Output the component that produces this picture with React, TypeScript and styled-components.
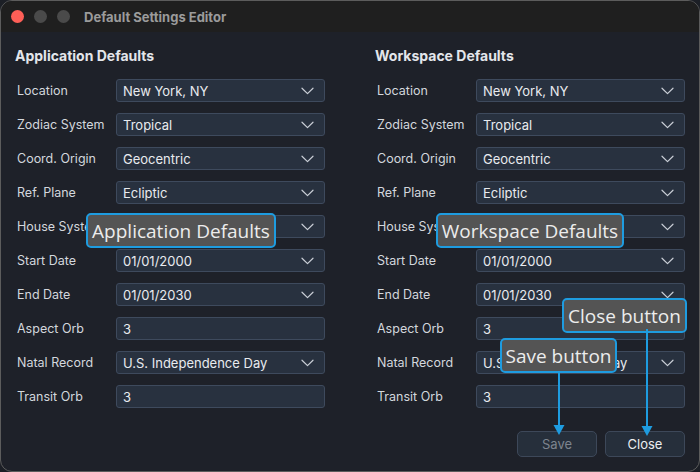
import { FC } from 'react';
import styled, { createGlobalStyle } from 'styled-components';

const GlobalStyle = createGlobalStyle`
  html, body {
    margin: 0;
    padding: 0;
    background: #1c1f26;
  }
  body {
    font-family: Inter, "Liberation Sans", sans-serif;
  }
`;

type Field = {
  label: string;
  value: string;
  select?: boolean;
};

const fields: Field[] = [
  { label: 'Location', value: 'New York, NY', select: true },
  { label: 'Zodiac System', value: 'Tropical', select: true },
  { label: 'Coord. Origin', value: 'Geocentric', select: true },
  { label: 'Ref. Plane', value: 'Ecliptic', select: true },
  { label: 'House System', value: 'Placidus', select: true },
  { label: 'Start Date', value: '01/01/2000', select: true },
  { label: 'End Date', value: '01/01/2030', select: true },
  { label: 'Aspect Orb', value: '3' },
  { label: 'Natal Record', value: 'U.S. Independence Day', select: true },
  { label: 'Transit Orb', value: '3' },
];

const Chevron: FC = () => (
  <svg width="13" height="8" viewBox="0 0 13 8" fill="none">
    <path d="M1 1.2 L6.5 6.6 L12 1.2" stroke="#c9ced6" strokeWidth="1.2" strokeLinecap="round" strokeLinejoin="round" />
  </svg>
);

const SettingsColumn: FC<{ title: string }> = ({ title }) => (
  <Column>
    <Heading>{title}</Heading>
    <Rows>
      {fields.map((f) => (
        <Row key={f.label}>
          <Label>{f.label}</Label>
          <Input>
            <span>{f.value}</span>
            {f.select && <Chevron />}
          </Input>
        </Row>
      ))}
    </Rows>
  </Column>
);

const Arrow: FC<{ x: number; y1: number; y2: number }> = ({ x, y1, y2 }) => (
  <ArrowSvg width="14" height={y2 - y1} style={{ left: x - 7, top: y1 }} viewBox={`0 0 14 ${y2 - y1}`}>
    <line x1="7" y1="0" x2="7" y2={y2 - y1 - 8} stroke="#1e9ce0" strokeWidth="2" />
    <path d={`M1.5 ${y2 - y1 - 10} L12.5 ${y2 - y1 - 10} L7 ${y2 - y1} Z`} fill="#1e9ce0" />
  </ArrowSvg>
);

const App: FC = () => (
  <>
    <GlobalStyle />
    <Window>
      <TitleBar>
        <Light color="#fe5f57" />
        <Light color="#4a4a4a" />
        <Light color="#4a4a4a" />
        <Title>Default Settings Editor</Title>
      </TitleBar>
      <Body>
        <Columns>
          <SettingsColumn title="Application Defaults" />
          <SettingsColumn title="Workspace Defaults" />
        </Columns>
        <Footer>
          <Button disabled>Save</Button>
          <Button>Close</Button>
        </Footer>
      </Body>

      <Callout style={{ left: 85, top: 212, width: 190 }}>Application Defaults</Callout>
      <Callout style={{ left: 435, top: 212, width: 188 }}>Workspace Defaults</Callout>
      <Callout style={{ left: 561, top: 297, width: 125 }}>Close button</Callout>
      <Callout style={{ left: 499, top: 337, width: 117 }}>Save button</Callout>
      <Arrow x={558} y1={370} y2={434} />
      <Arrow x={646} y1={328} y2={435} />
    </Window>
  </>
);

export default App;

const Window = styled.div`
  position: relative;
  box-sizing: border-box;
  width: 700px;
  height: 472px;
  border: 1px solid #5c5c5c;
  border-radius: 12px;
  overflow: hidden;
  background: #1e2129;
  display: flex;
  flex-direction: column;
`;

const TitleBar = styled.div`
  height: 31px;
  background: #1f1f1f;
  display: flex;
  align-items: center;
  padding-left: 10px;
  gap: 10px;
  flex-shrink: 0;
`;

const Light = styled.div<{ color: string }>`
  width: 13px;
  height: 13px;
  border-radius: 50%;
  background: ${({ color }) => color};
`;

const Title = styled.div`
  margin-left: 4px;
  font-size: 13px;
  font-weight: 700;
  color: #9b9b9b;
`;

const Body = styled.div`
  flex: 1;
  display: flex;
  flex-direction: column;
  padding: 15px 14px 14px 14px;
`;

const Columns = styled.div`
  display: grid;
  grid-template-columns: 310px 310px;
  column-gap: 50px;
`;

const Column = styled.div`
  display: flex;
  flex-direction: column;
`;

const Heading = styled.div`
  font-size: 14px;
  font-weight: 700;
  color: #e3e6eb;
  height: 18px;
  line-height: 18px;
  margin-bottom: 14px;
`;

const Rows = styled.div`
  display: flex;
  flex-direction: column;
  gap: 11px;
`;

const Row = styled.div`
  display: flex;
  align-items: center;
`;

const Label = styled.div`
  box-sizing: border-box;
  width: 101px;
  padding-left: 2px;
  font-size: 12.5px;
  color: #d3d7dd;
  margin-top: -1px;
`;

const Input = styled.div`
  box-sizing: border-box;
  width: 209px;
  height: 23px;
  padding: 0 10px 0 6px;
  display: flex;
  align-items: center;
  justify-content: space-between;
  background: #28313f;
  border: 1px solid #3e4a5d;
  border-radius: 3px;
  font-size: 13px;
  color: #e8ebef;
`;

const Footer = styled.div`
  margin-top: auto;
  display: flex;
  justify-content: flex-end;
  gap: 8px;
`;

const Button = styled.button`
  box-sizing: border-box;
  width: 80px;
  height: 26px;
  background: #262f3b;
  border: 1px solid #3d4859;
  border-radius: 5px;
  font-family: Inter, "Liberation Sans", sans-serif;
  font-size: 13px;
  color: #eceef1;
  &:disabled {
    color: #7d848e;
  }
`;

const Callout = styled.div`
  position: absolute;
  box-sizing: border-box;
  height: 35px;
  display: flex;
  align-items: center;
  justify-content: center;
  background: #545454;
  border: 2px solid #1e9ce0;
  border-radius: 5px;
  font-family: "Open Sans", sans-serif;
  font-size: 19px;
  color: #ececec;
  white-space: nowrap;
`;

const ArrowSvg = styled.svg`
  position: absolute;
`;
